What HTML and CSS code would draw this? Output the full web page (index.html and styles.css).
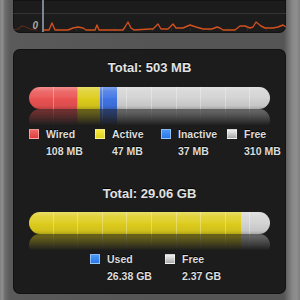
FILE: index.html
```html
<!DOCTYPE html>
<html>
<head>
<meta charset="utf-8">
<link rel="stylesheet" href="styles.css">
</head>
<body>
<div class="screen">
  <div class="panel graph-panel">
    <svg class="graph" width="273" height="33" viewBox="0 0 273 33">
      <line x1="0" y1="13.5" x2="273" y2="13.5" stroke="#333" stroke-width="1"/>
      <g stroke="#2c2c2c" stroke-width="1">
        <line x1="44.5" y1="28" x2="44.5" y2="31"/>
        <line x1="63.5" y1="28" x2="63.5" y2="31"/>
        <line x1="82.5" y1="28" x2="82.5" y2="31"/>
        <line x1="101.5" y1="28" x2="101.5" y2="31"/>
        <line x1="120.5" y1="28" x2="120.5" y2="31"/>
        <line x1="139.5" y1="28" x2="139.5" y2="31"/>
        <line x1="158.5" y1="28" x2="158.5" y2="31"/>
        <line x1="177.5" y1="28" x2="177.5" y2="31"/>
        <line x1="196.5" y1="28" x2="196.5" y2="31"/>
        <line x1="215.5" y1="28" x2="215.5" y2="31"/>
        <line x1="234.5" y1="28" x2="234.5" y2="31"/>
        <line x1="253.5" y1="28" x2="253.5" y2="31"/>
      </g>
      <polyline fill="none" stroke="#5a2a1a" stroke-width="1.2" points="0,30 5,29 9,26 13,27 17,29 24,30"/>
      <polyline fill="none" stroke="#d2501e" stroke-width="1.4" stroke-linejoin="round" points="29,30 36,30 39,23 42,30 55,30 60,28 65,27 70,28 73,30 82,30 84,25 86,30 110,30 112,27 115,22 118,28 121,30 137,29 140,29 145,24 148,29 155,29 160,24 163,28 170,28 177,25 183,27 190,29 199,29 204,27 207,28 210,30 222,30 227,26 232,26 237,28 240,27 243,22 248,26 252,28 260,28 265,27 270,25 273,27"/>
      <line x1="30" y1="0" x2="30" y2="32" stroke="#7a8494" stroke-width="2"/>
      <text x="25" y="28.5" class="axis-label" text-anchor="end">0</text>
    </svg>
  </div>
  <div class="panel main-panel">
    <div class="section">
      <div class="title">Total: 503 MB</div>
      <div class="bar">
        <div class="seg red" style="width:49px"></div>
        <div class="seg yellow" style="width:22px"></div>
        <div class="seg blue" style="width:17px"></div>
        <div class="seg grey" style="flex:1"></div>
      </div>
      <div class="legend">
        <div class="item"><span class="sq red"></span><div class="txt"><div class="lbl">Wired</div><div class="val">108 MB</div></div></div>
        <div class="item"><span class="sq yellow"></span><div class="txt"><div class="lbl">Active</div><div class="val">47 MB</div></div></div>
        <div class="item"><span class="sq blue"></span><div class="txt"><div class="lbl">Inactive</div><div class="val">37 MB</div></div></div>
        <div class="item"><span class="sq grey"></span><div class="txt"><div class="lbl">Free</div><div class="val">310 MB</div></div></div>
      </div>
    </div>
    <div class="section disk">
      <div class="title">Total: 29.06 GB</div>
      <div class="bar">
        <div class="seg yellow" style="width:212px"></div>
        <div class="seg grey" style="flex:1"></div>
      </div>
      <div class="legend centered">
        <div class="item wide"><span class="sq blue"></span><div class="txt"><div class="lbl">Used</div><div class="val">26.38 GB</div></div></div>
        <div class="item"><span class="sq grey"></span><div class="txt"><div class="lbl">Free</div><div class="val">2.37 GB</div></div></div>
      </div>
    </div>
  </div>
</div>
</body>
</html>
```
FILE: styles.css
```css
html, body {
  margin: 0;
  padding: 0;
}
body {
  width: 300px;
  height: 300px;
  overflow: hidden;
  font-family: "Liberation Sans", Arial, sans-serif;
  background:
    linear-gradient(to right, #7c7c7c 0px, #929292 2px, #6c6c6c 5px, #5a5a5a 10px, #555 50%, #555 284px, #6e6e6e 288px, #8a8a8a 293px, #8e8e8e 297px, #7c7c7c 300px);
}
.screen {
  display: flex;
  flex-direction: column;
  padding: 0 14px 0 13px;
  height: 300px;
  box-sizing: border-box;
}
.panel {
  background: #1c1c1c;
  box-shadow: inset 0 0 0 1px rgba(0,0,0,0.35);
}
.graph-panel {
  height: 33px;
  border-radius: 0 0 7px 7px;
  overflow: hidden;
}
.graph {
  display: block;
}
.axis-label {
  font-family: "Liberation Sans", Arial, sans-serif;
  font-style: italic;
  font-weight: bold;
  font-size: 10px;
  fill: #a8a8a8;
}
.main-panel {
  margin-top: 16px;
  height: 245px;
  border-radius: 7px;
  padding: 11px 16px 0 16px;
  box-sizing: border-box;
}
.section.disk {
  margin-top: 28px;
}
.title {
  height: 16px;
  line-height: 16px;
  text-align: center;
  color: #e2e2e2;
  font-weight: bold;
  font-size: 13px;
  text-shadow: 0 -1px 0 #000;
}
.bar {
  margin-top: 11px;
  height: 22px;
  border-radius: 11px;
  display: flex;
  overflow: hidden;
  position: relative;
  -webkit-box-reflect: below 0 linear-gradient(transparent 25%, rgba(255,255,255,0.5));
}
.disk .bar {
  margin-top: 10px;
}
.bar::before {
  content: "";
  position: absolute;
  inset: 0;
  background: linear-gradient(to bottom, rgba(255,255,255,0.35) 0%, rgba(255,255,255,0.15) 20%, rgba(255,255,255,0.06) 48%, rgba(0,0,0,0) 52%, rgba(0,0,0,0.06) 85%, rgba(0,0,0,0.2) 100%);
}
.bar::after {
  content: "";
  position: absolute;
  inset: 0;
  background: repeating-linear-gradient(to right, transparent 0, transparent 23.6px, rgba(255,255,255,0.3) 23.6px, rgba(255,255,255,0.3) 24.6px);
}
.seg { height: 100%; }
.seg.red { background: #ea5252; }
.seg.yellow { background: #ddcc1c; }
.seg.blue { background: #3f74e4; }
.seg.grey { background: #d2d2d2; }
.legend {
  display: flex;
  margin-top: 18px;
}
.legend.centered {
  padding-left: 61px;
}
.item {
  display: flex;
  width: 66px;
  flex: none;
}
.item.wide {
  width: 75px;
}
.sq {
  width: 9px;
  height: 9px;
  margin-top: 2px;
  margin-right: 7px;
  border: 1px solid rgba(255,255,255,0.45);
  box-sizing: content-box;
  flex: none;
  width: 8px;
  height: 8px;
  background-clip: padding-box;
}
.sq.red { background: linear-gradient(#f06666, #e03c3c); }
.sq.yellow { background: linear-gradient(#f6ea44, #e2d21c); }
.sq.blue { background: linear-gradient(#4a9af6, #2a78e8); }
.sq.grey { background: linear-gradient(#f0f0f0, #a8a8a8); }
.lbl, .val {
  color: #dcdcdc;
  font-weight: bold;
  font-size: 10.5px;
  height: 14px;
  line-height: 14px;
  white-space: nowrap;
  text-shadow: 0 -1px 0 #000;
}
.val {
  margin-top: 3px;
}
```
